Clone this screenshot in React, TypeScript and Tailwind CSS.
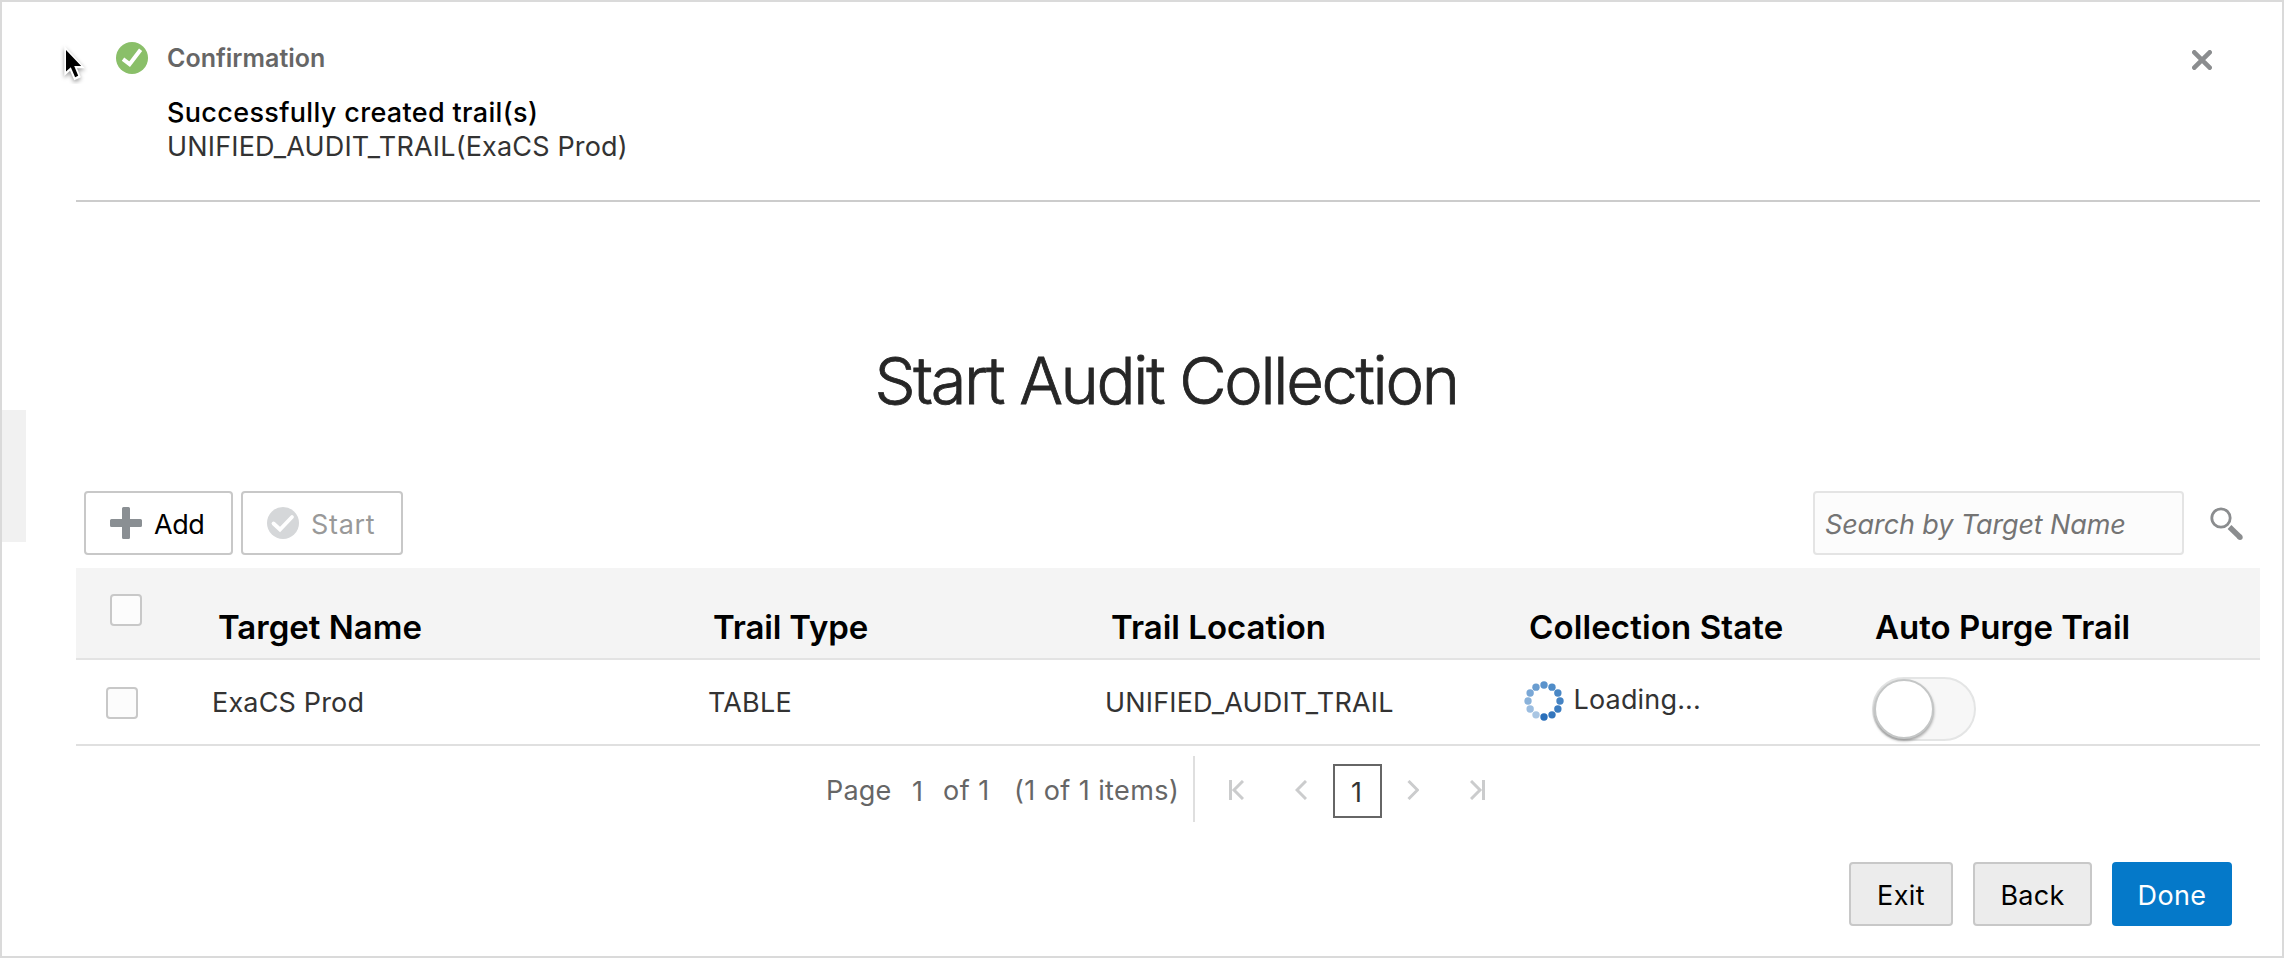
import type { ReactNode } from 'react';

const spinnerDots = [
  '#5b93cc', '#4f8cc8', '#4987c5', '#4583c3', '#3b7cc0', '#3476bd',
  '#2a6fba', '#a9c6e3', '#9bbde0', '#8ab2da', '#79a7d6', '#6a9dd0',
];

function CheckCircle({ color }: { color: string }) {
  return (
    <svg className="size-8 shrink-0" viewBox="0 0 32 32">
      <circle cx="16" cy="16" r="16" fill={color} />
      <path d="M7 17.2 L13.6 22.2 L24.6 7.8" fill="none" stroke="#fff" strokeWidth="4" />
    </svg>
  );
}

function Spinner() {
  return (
    <svg className="size-10 shrink-0" viewBox="-20 -20 40 40">
      {spinnerDots.map((fill, i) => {
        const a = (i * Math.PI) / 6;
        return <circle key={i} cx={16 * Math.sin(a)} cy={-16 * Math.cos(a)} r="3.7" fill={fill} />;
      })}
    </svg>
  );
}

function Cursor() {
  return (
    <svg className="absolute left-[60px] top-[42px] h-[42px] w-[28px]" viewBox="60 42 28 42">
      <path
        d="M65 47.5 V74.5 L70.4 69.6 L74.6 79.4 L80 77 L75.9 67.6 H83.4 Z"
        fill="#fff"
        stroke="#fff"
        strokeWidth="1.4"
        className="drop-shadow-[0_2px_2px_rgba(0,0,0,0.4)]"
      />
      <path d="M66 50 V71.6 L70.8 67.2 L75.1 77.2 L78.2 75.8 L74.2 66 H81.2 Z" fill="#000" />
    </svg>
  );
}

function Checkbox({ className }: { className: string }) {
  return <span className={`block size-8 rounded-[4px] border-2 border-[#c8c8c8] bg-[#fcfcfc] ${className}`} />;
}

function FooterButton({ className, children }: { className: string; children: ReactNode }) {
  return (
    <button className={`flex h-16 items-center justify-center rounded-[4px] ${className}`}>{children}</button>
  );
}

const columns = 'grid grid-cols-[136px_496px_397px_419px_348px_388px]';

export default function App() {
  return (
    <div className="relative flex h-[958px] w-[2284px] overflow-hidden border-2 border-[#dadada] bg-white font-['Inter',sans-serif] text-[27px] leading-[34px] tracking-[0.17px] text-[#333]">
      <div className="w-[74px] shrink-0 pt-[408px]">
        <div className="h-[132px] w-6 bg-[#f1f1f1]" />
      </div>

      <main className="w-[2184px] shrink-0">
        <section className="flex h-[200px] items-start border-b-2 border-[#ccc] pl-10 pt-10">
          <CheckCircle color="#8abf69" />
          <div className="flex-1 pl-5">
            <h2 className="-ml-px text-[25px] font-semibold leading-8 tracking-normal text-[#666]">Confirmation</h2>
            <p className="-ml-px mt-[22px] font-medium tracking-[0.34px] text-black">Successfully created trail(s)</p>
            <p className="-ml-px">UNIFIED_AUDIT_TRAIL(ExaCS Prod)</p>
          </div>
          <svg className="mr-[48px] mt-2 size-5" viewBox="0 0 20 20">
            <path d="M2.3 2.3 L17.7 17.7 M17.7 2.3 L2.3 17.7" stroke="#8b8d8f" strokeWidth="4.6" strokeLinecap="round" />
          </svg>
        </section>

        <h1 className="mt-[139px] pr-1 text-center text-[65px] font-light leading-[80px] tracking-[-2.32px] text-[#262626] [-webkit-text-stroke:0.8px_#262626]">
          Start Audit Collection
        </h1>

        <div className="mt-[70px] flex h-16 items-center pl-2">
          <button className="flex h-16 w-[149px] items-center rounded-[4px] border-2 border-[#c8c8c8] pl-6 text-black">
            <svg className="size-8" viewBox="0 0 32 32">
              <path d="M12 1.5 Q12 0 13.5 0 H18.5 Q20 0 20 1.5 V12 H30.5 Q32 12 32 13.5 V18.5 Q32 20 30.5 20 H20 V30.5 Q20 32 18.5 32 H13.5 Q12 32 12 30.5 V20 H1.5 Q0 20 0 18.5 V13.5 Q0 12 1.5 12 H12 Z" fill="#8a8f93" />
            </svg>
            <span className="ml-3 mt-1 tracking-[-0.4px]">Add</span>
          </button>
          <button className="ml-2 flex h-16 w-[162px] items-center rounded-[4px] border-2 border-[#c8c8c8] pl-6 text-[#999]">
            <svg className="size-8" viewBox="0 0 32 32">
              <circle cx="16" cy="16" r="16" fill="#d5d7d9" />
              <path d="M6.5 16.5 L13 22.5 L25 10" fill="none" stroke="#fff" strokeWidth="3.8" strokeLinecap="round" />
            </svg>
            <span className="ml-3 mt-1 tracking-[0.67px]">Start</span>
          </button>
          <div className="ml-auto flex h-16 w-[371px] items-center rounded-[4px] border-2 border-[#e4e4e4] bg-[#fcfcfc] pl-[10px] pt-[3px] italic tracking-[-0.12px] text-[#747474]">
            Search by Target Name
          </div>
          <svg className="ml-[26px] mr-[17px] h-[33px] w-[33px]" viewBox="0 0 33 33">
            <circle cx="11" cy="11" r="9.2" fill="none" stroke="#8b8d8f" strokeWidth="2.8" />
            <path d="M19.5 20 L29.8 30" stroke="#8b8d8f" strokeWidth="5.4" />
            <circle cx="30" cy="30.2" r="2.7" fill="#8b8d8f" />
          </svg>
        </div>

        <div className={`${columns} mt-[13px] h-[92px] border-b-2 border-[#e3e3e3] bg-[#f4f4f4] text-[33px] font-semibold leading-[40px] tracking-normal text-black`}>
          <Checkbox className="ml-[34px] mt-[26px]" />
          <span className="pl-1.5 pt-[39px]">Target Name</span>
          <span className="pl-[5px] pt-[39px] tracking-[-0.15px]">Trail Type</span>
          <span className="pl-1.5 pt-[39px]">Trail Location</span>
          <span className="pl-[5px] pt-[39px] tracking-[0.13px]">Collection State</span>
          <span className="pl-[3px] pt-[39px]">Auto Purge Trail</span>
        </div>
        <div className={`${columns} h-[86px] border-b-2 border-[#e0e0e0]`}>
          <Checkbox className="ml-[30px] mt-[27px]" />
          <span className="pt-[26px]">ExaCS Prod</span>
          <span className="pt-[26px]">TABLE</span>
          <span className="pt-[26px]">UNIFIED_AUDIT_TRAIL</span>
          <span className="flex items-start pt-[21px]">
            <Spinner />
            <span className="ml-[9.5px] mt-0.5">Loading...</span>
          </span>
          <span className="mt-[17px] block h-16 w-[104px] rounded-full border-2 border-[#e4e5e5] bg-[#f7f7f7]">
            <span className="block size-[60px] rounded-full border-2 border-[#c4c6c6] bg-white shadow-[0_2px_3px_rgba(0,0,0,0.35)]" />
          </span>
        </div>

        <nav className="flex h-[88px] items-start pl-[750px] text-[#666]">
          <span className="mt-7 w-[86px]">Page</span>
          <span className="mt-[29px] w-[31px]">1</span>
          <span className="mt-7 w-[71px] tracking-[0.5px]">of 1</span>
          <span className="mt-7 w-[179px] whitespace-nowrap tracking-[0.42px]">(1 of 1 items)</span>
          <span className="mt-2.5 h-[66px] w-0.5 bg-[#dfdfdf]" />
          <svg className="ml-[34px] mt-[34px] h-5 w-[15px]" viewBox="0 0 15 20">
            <path d="M1.5 0 V20" stroke="#cbcccd" strokeWidth="3" />
            <path d="M14 1 L5 10 L14 19" fill="none" stroke="#cbcccd" strokeWidth="3" />
          </svg>
          <svg className="ml-[51px] mt-[34px] h-5 w-3" viewBox="0 0 12 20">
            <path d="M11 1 L2 10 L11 19" fill="none" stroke="#cbcccd" strokeWidth="3" />
          </svg>
          <span className="ml-[26px] mt-[18px] flex h-[54px] w-[49px] items-center justify-center border-2 border-[#666] pr-0.5 pt-1 text-[#333]">
            1
          </span>
          <svg className="ml-[25px] mt-[34px] h-5 w-3" viewBox="0 0 12 20">
            <path d="M1.5 1 L10.5 10 L1.5 19" fill="none" stroke="#cbcccd" strokeWidth="3" />
          </svg>
          <svg className="ml-[51px] mt-[34px] h-5 w-[15px]" viewBox="0 0 15 20">
            <path d="M13.5 0 V20" stroke="#cbcccd" strokeWidth="3" />
            <path d="M1 1 L10 10 L1 19" fill="none" stroke="#cbcccd" strokeWidth="3" />
          </svg>
        </nav>

        <footer className="mt-7 flex justify-end gap-5 pr-7 text-black">
          <FooterButton className="w-[104px] border-2 border-[#c8c8c8] bg-[#ececec] pt-1 tracking-[0.4px]">Exit</FooterButton>
          <FooterButton className="w-[119px] border-2 border-[#c8c8c8] bg-[#ececec] pt-1 tracking-[0.25px]">Back</FooterButton>
          <FooterButton className="w-[120px] bg-[#0579c9] pt-1 tracking-[0.4px] text-white">Done</FooterButton>
        </footer>
      </main>

      <div className="absolute -left-0.5 -top-0.5">
        <Cursor />
      </div>
    </div>
  );
}
